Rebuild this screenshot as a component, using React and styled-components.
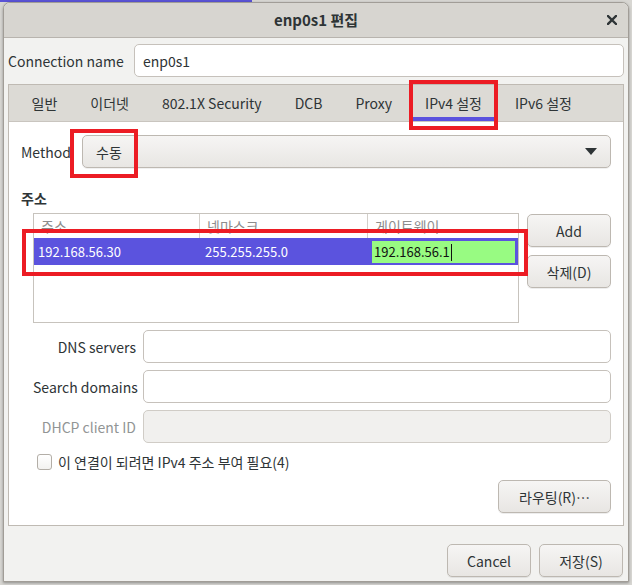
import styled, { createGlobalStyle } from "styled-components";

const GlobalStyle = createGlobalStyle`
  html, body { margin: 0; padding: 0; }
  body {
    width: 632px;
    height: 585px;
    overflow: hidden;
    background: linear-gradient(#5a53d6, #5a53d6) 0 0 / 252px 2px no-repeat, #d8d7d3;
    font-family: "Noto Sans CJK KR", "Noto Sans", sans-serif;
    font-size: 14px;
    color: #2e3436;
  }
  * { box-sizing: border-box; }
`;

const Window = styled.div`
  margin: 2px 0 0 3px;
  width: 626px;
  height: 580px;
  border: 1px solid #a19d97;
  border-radius: 7px 7px 0 0;
  background: #f2f2f0;
  box-shadow: 0 1px 3px rgba(0, 0, 0, 0.35);
  display: flex;
  flex-direction: column;
`;

const TitleBar = styled.div`
  height: 35px;
  flex: none;
  display: grid;
  grid-template-columns: 1fr auto 1fr;
  align-items: center;
  background: #d7d5d0;
  border-bottom: 1px solid #b8b4ae;
  border-radius: 6px 6px 0 0;
`;

const Title = styled.div`
  grid-column: 2;
  font-size: 15px;
  font-weight: 700;
  line-height: 20px;
`;

const Close = styled.div`
  justify-self: end;
  margin-right: 11px;
  display: flex;
`;

const Body = styled.div`
  flex: 1;
  display: flex;
  flex-direction: column;
  padding: 6px 4px 6px 4px;
`;

const Row = styled.div`
  display: flex;
  align-items: center;
  height: 33px;
  flex: none;
`;

const Label = styled.div`
  width: ${(p) => p.$w}px;
  flex: none;
  line-height: 20px;
  white-space: nowrap;
  color: ${(p) => (p.$dim ? "#929595" : "inherit")};
  text-align: ${(p) => (p.$right ? "right" : "left")};
`;

const Entry = styled.div`
  flex: 1;
  height: 33px;
  display: flex;
  align-items: center;
  padding: 0 8px;
  background: ${(p) => (p.$disabled ? "#f1f0ee" : "#ffffff")};
  border: 1px solid ${(p) => (p.$disabled ? "#d0ccc6" : "#c6c1bb")};
  border-radius: 5px;
`;

const Notebook = styled.div`
  margin-top: 7px;
  flex: 1;
  display: flex;
  flex-direction: column;
  border: 1px solid #bfbab3;
  background: #ffffff;
`;

const TabBar = styled.div`
  height: 37px;
  flex: none;
  display: flex;
  padding-left: 6px;
  background: #dcdad5;
  border-bottom: 1px solid #c9c5bf;
`;

const Tab = styled.div`
  position: relative;
  margin: 0 4px;
  padding: 0 12.5px;
  display: flex;
  align-items: center;
  white-space: nowrap;
  line-height: 20px;

  &::after {
    content: "";
    display: ${(p) => (p.$active ? "block" : "none")};
    position: absolute;
    left: 0;
    right: 0;
    bottom: 0;
    height: 4px;
    background: #5b52de;
  }
`;

const Page = styled.div`
  flex: 1;
  display: flex;
  flex-direction: column;
  padding: 13px 12px 12px 12px;
`;

const Combo = styled.div`
  position: relative;
  flex: 1;
  height: 33px;
  display: flex;
  align-items: center;
  justify-content: space-between;
  padding: 0 13px 0 13px;
  border: 1px solid #bdb8b1;
  border-radius: 5px;
  background: linear-gradient(#f6f5f4, #e8e6e3);
  box-shadow: 0 1px rgba(0, 0, 0, 0.06);
`;

const Arrow = styled.div`
  width: 0;
  height: 0;
  border-left: 6px solid transparent;
  border-right: 6px solid transparent;
  border-top: 7px solid #2e3436;
`;

const Section = styled.div`
  margin-top: 20px;
  margin-bottom: 5px;
  font-weight: 700;
  line-height: 20px;
`;

const AddrArea = styled.div`
  display: flex;
  gap: 8px;
  margin-left: 12px;
  height: 110px;
  flex: none;
`;

const Table = styled.div`
  flex: 1;
  border: 1px solid #c7c3bd;
  background: #ffffff;
`;

const Cols = styled.div`
  display: grid;
  grid-template-columns: 166px 168px 1fr;
`;

const HeadRow = styled(Cols)`
  height: 24px;
`;

const HeadCell = styled.div`
  padding-left: 7px;
  display: flex;
  align-items: center;
  color: #8d8d8d;
  border-right: ${(p) => (p.$last ? "none" : "1px solid #d3cfca")};
  line-height: 20px;
`;

const DataRow = styled(Cols)`
  position: relative;
  height: 27px;
  background: #5b53de;
  color: #ffffff;
  font-size: 13px;
`;

const Cell = styled.div`
  display: flex;
  align-items: center;
  padding-left: ${(p) => p.$pad}px;
  line-height: 20px;
`;

const EditCell = styled.div`
  margin: 3px 3px 2px 4px;
  padding-left: 2px;
  display: flex;
  align-items: center;
  background: #98fb82;
  color: #111111;
  line-height: 20px;
`;

const Caret = styled.span`
  display: inline-block;
  width: 1px;
  height: 17px;
  margin-left: 1px;
  background: #111111;
`;

const SideButtons = styled.div`
  width: 84px;
  display: flex;
  flex-direction: column;
  gap: 8px;
  padding-top: 1px;
`;

const Button = styled.div`
  width: ${(p) => p.$w || 84}px;
  height: 33px;
  flex: none;
  display: flex;
  align-items: center;
  justify-content: center;
  border: 1px solid #bdb8b1;
  border-radius: 5px;
  background: linear-gradient(#f6f5f4, #e8e6e3);
  box-shadow: 0 1px rgba(0, 0, 0, 0.07);
  line-height: 20px;
  white-space: nowrap;
`;

const Form = styled.div`
  margin: 7px 0 0 12px;
  display: grid;
  grid-template-columns: 103px 1fr;
  grid-auto-rows: 33px;
  column-gap: 7px;
  row-gap: 7px;
  align-items: center;
`;

const CheckRow = styled.div`
  margin: 11px 0 0 16px;
  height: 16px;
  display: flex;
  align-items: center;
  gap: 6px;
  line-height: 20px;
`;

const Check = styled.div`
  width: 15px;
  height: 16px;
  border: 1px solid #b3aea7;
  border-radius: 3px;
  background: linear-gradient(#ffffff, #f3f2f0);
`;

const RouteRow = styled.div`
  margin-top: 10px;
  display: flex;
  justify-content: flex-end;
`;

const Actions = styled.div`
  margin-top: 18px;
  display: flex;
  justify-content: flex-end;
  gap: 8px;
  padding-right: 1px;
`;

const RedBox = styled.div`
  position: absolute;
  z-index: 5;
  left: ${(p) => p.$l}px;
  top: ${(p) => p.$t}px;
  right: ${(p) => (p.$r === undefined ? "auto" : `${p.$r}px`)};
  bottom: ${(p) => (p.$b === undefined ? "auto" : `${p.$b}px`)};
  width: ${(p) => (p.$w ? `${p.$w}px` : "auto")};
  height: ${(p) => (p.$h ? `${p.$h}px` : "auto")};
  border: 4px solid #ec1c24;
  pointer-events: none;
`;

const tabs = ["일반", "이더넷", "802.1X Security", "DCB", "Proxy", "IPv4 설정", "IPv6 설정"];

export default function App() {
  return (
    <>
      <GlobalStyle />
      <Window>
        <TitleBar>
          <Title>enp0s1 편집</Title>
          <Close>
            <svg width="10" height="10" viewBox="0 0 10 10">
              <path d="M1 1 L9 9 M9 1 L1 9" stroke="#2e3436" strokeWidth="2.4" strokeLinecap="square" />
            </svg>
          </Close>
        </TitleBar>
        <Body>
          <Row>
            <Label $w={126}>Connection name</Label>
            <Entry>enp0s1</Entry>
          </Row>
          <Notebook>
            <TabBar>
              {tabs.map((t) => (
                <Tab key={t} $active={t === "IPv4 설정"}>
                  {t}
                  {t === "IPv4 설정" && <RedBox $l={-4} $r={-4} $t={-5} $b={-9} />}
                </Tab>
              ))}
            </TabBar>
            <Page>
              <Row>
                <Label $w={61}>Method</Label>
                <Combo>
                  <span>수동</span>
                  <Arrow />
                  <RedBox $l={-13} $t={-7} $w={68} $h={49} />
                </Combo>
              </Row>
              <Section>주소</Section>
              <AddrArea>
                <Table>
                  <HeadRow>
                    <HeadCell>주소</HeadCell>
                    <HeadCell>넷마스크</HeadCell>
                    <HeadCell $last>게이트웨이</HeadCell>
                  </HeadRow>
                  <DataRow>
                    <Cell $pad={4}>192.168.56.30</Cell>
                    <Cell $pad={5}>255.255.255.0</Cell>
                    <EditCell>
                      192.168.56.1
                      <Caret />
                    </EditCell>
                    <RedBox $l={-12} $r={-10} $t={-9} $b={-11} />
                  </DataRow>
                </Table>
                <SideButtons>
                  <Button>Add</Button>
                  <Button>삭제(D)</Button>
                </SideButtons>
              </AddrArea>
              <Form>
                <Label $right>DNS servers</Label>
                <Entry />
                <Label $right>Search domains</Label>
                <Entry />
                <Label $right $dim>DHCP client ID</Label>
                <Entry $disabled />
              </Form>
              <CheckRow>
                <Check />
                <span>이 연결이 되려면 IPv4 주소 부여 필요(4)</span>
              </CheckRow>
              <RouteRow>
                <Button $w={113}>라우팅(R)…</Button>
              </RouteRow>
            </Page>
          </Notebook>
          <Actions>
            <Button>Cancel</Button>
            <Button>저장(S)</Button>
          </Actions>
        </Body>
      </Window>
    </>
  );
}
